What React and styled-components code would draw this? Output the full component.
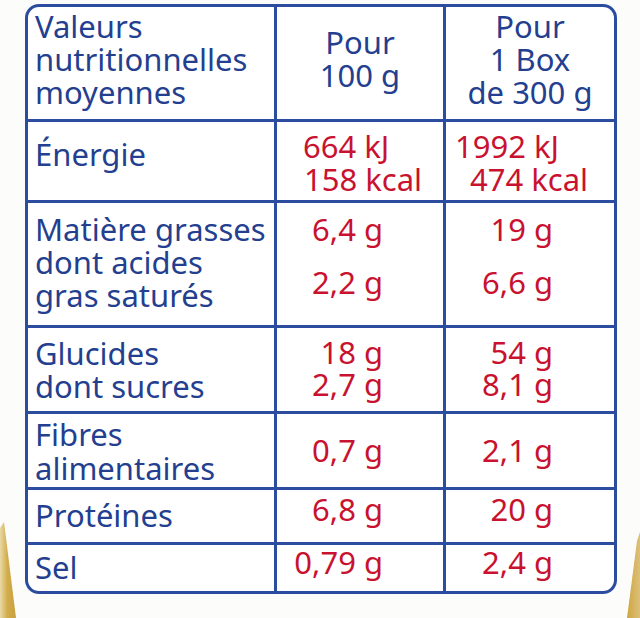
import React from "react";
import styled, { createGlobalStyle } from "styled-components";

const Global = createGlobalStyle`
  html, body { margin: 0; padding: 0; background: #fcfcfb; }
  #root { width: 640px; height: 618px; }
`;

const BLUE = "#2c4c9f";
const TEXT_BLUE = "#243f8f";
const RED = "#c8122f";

const Page = styled.div`
  position: relative;
  width: 640px;
  height: 618px;
  overflow: hidden;
  box-sizing: border-box;
  padding: 4px 0 0 25px;
  font-family: "Noto Sans", "Open Sans", sans-serif;
`;

const Table = styled.div`
  position: relative;
  z-index: 1;
  display: grid;
  grid-template-columns: 246px 166px 168px;
  grid-template-rows: 112px 78px 122px 83px 73px 52px 46px;
  gap: 3px;
  width: max-content;
  background: ${BLUE};
  border: 3px solid ${BLUE};
  border-radius: 14px;
  overflow: hidden;
`;

const Cell = styled.div`
  background: #fff;
  box-sizing: border-box;
  padding-top: ${(p) => p.$pt || 0}px;
  padding-left: ${(p) => p.$pl || 0}px;
  padding-right: ${(p) => p.$pr || 0}px;
  text-align: ${(p) => p.$align || "left"};
  font-size: 31px;
  line-height: 33px;
  color: ${(p) => (p.$red ? RED : TEXT_BLUE)};
  white-space: nowrap;
`;

const Line = styled.div`
  padding-left: ${(p) => p.$indent || 0}px;
  margin-top: ${(p) => p.$mt || 0}px;
`;

const Decor = styled.svg`
  position: absolute;
  left: 0;
  top: 0;
  z-index: 0;
`;

function Label({ pt, lines, mts = [] }) {
  return (
    <Cell $pt={pt} $pl={7}>
      {lines.map((l, i) => (
        <Line key={i} $mt={mts[i]}>
          {l}
        </Line>
      ))}
    </Cell>
  );
}

function Values({ pt, lines, pr, mts = [] }) {
  return (
    <Cell $red $align="right" $pt={pt} $pr={pr}>
      {lines.map((l, i) => (
        <Line key={i} $mt={mts[i]}>
          {l}
        </Line>
      ))}
    </Cell>
  );
}

export default function App() {
  return (
    <>
      <Global />
      <Page>
        <Decor width="640" height="618" viewBox="0 0 640 618">
          <defs>
            <linearGradient id="gl" x1="0" y1="0" x2="1" y2="0">
              <stop offset="0" stopColor="#e9d9a6" />
              <stop offset="0.45" stopColor="#d2ad4c" />
              <stop offset="1" stopColor="#c99f3c" />
            </linearGradient>
            <linearGradient id="gr" x1="0" y1="0" x2="1" y2="0">
              <stop offset="0" stopColor="#cfa640" />
              <stop offset="1" stopColor="#dcc07a" />
            </linearGradient>
          </defs>
          <polygon points="0,528 4,522 16,618 0,618" fill="url(#gl)" />
          <polygon points="640,532 637,541 627,618 640,618" fill="url(#gr)" />
        </Decor>
        <Table>
          <Label pt={3} lines={["Valeurs", "nutritionnelles", "moyennes"]} />
          <Cell $align="center" $pt={19}>
            <Line>Pour</Line>
            <Line>100 g</Line>
          </Cell>
          <Cell $align="center" $pt={3}>
            <Line>Pour</Line>
            <Line>1 Box</Line>
            <Line>de 300 g</Line>
          </Cell>

          <Label pt={16} lines={["Énergie"]} />
          <Cell $red $pt={8} $pl={26}>
            <Line>664 kJ</Line>
            <Line $indent={1}>158 kcal</Line>
          </Cell>
          <Cell $red $pt={8} $pl={9}>
            <Line>1992 kJ</Line>
            <Line $indent={15}>474 kcal</Line>
          </Cell>

          <Label pt={10} lines={["Matière grasses", "dont acides", "gras saturés"]} />
          <Values pt={10} pr={60} lines={["6,4 g", "2,2 g"]} mts={[0, 20]} />
          <Values pt={10} pr={61} lines={["19 g", "6,6 g"]} mts={[0, 20]} />

          <Label pt={9} lines={["Glucides", "dont sucres"]} />
          <Values pt={8} pr={60} lines={["18 g", "2,7 g"]} mts={[0, -1]} />
          <Values pt={8} pr={61} lines={["54 g", "8,1 g"]} mts={[0, -1]} />

          <Label pt={4} lines={["Fibres", "alimentaires"]} mts={[0, 1]} />
          <Values pt={20} pr={60} lines={["0,7 g"]} />
          <Values pt={20} pr={61} lines={["2,1 g"]} />

          <Label pt={9} lines={["Protéines"]} />
          <Values pt={3} pr={60} lines={["6,8 g"]} />
          <Values pt={3} pr={61} lines={["20 g"]} />

          <Label pt={6} lines={["Sel"]} />
          <Values pt={1} pr={60} lines={["0,79 g"]} />
          <Values pt={1} pr={61} lines={["2,4 g"]} />
        </Table>
      </Page>
    </>
  );
}
